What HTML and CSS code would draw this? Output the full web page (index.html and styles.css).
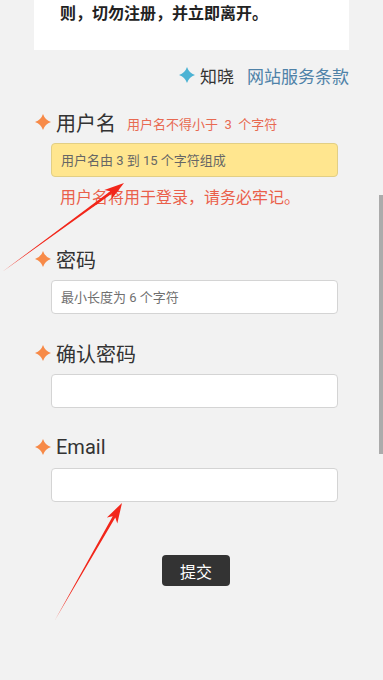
FILE: index.html
```html
<!DOCTYPE html>
<html lang="zh-CN">
<head>
    <meta charset="UTF-8">
    <meta name="viewport" content="width=device-width, initial-scale=1.0">
    <title>注册</title>
    <link rel="stylesheet" href="styles.css">
</head>
<body>
    <div class="wrap">
        <div class="notice">
            <p>则，切勿注册，并立即离开。</p>
        </div>

        <div class="terms">
            <svg class="star" viewBox="0 0 16 16"><path d="M8 0Q10 6 16 8Q10 10 8 16Q6 10 0 8Q6 6 8 0Z" fill="#4db3d4"/></svg>
            <span class="ok">知晓</span>
            <a href="#" class="terms-link">网站服务条款</a>
        </div>

        <form class="reg">
            <div class="field">
                <label class="label">
                    <svg class="star" viewBox="0 0 16 16"><path d="M8 0Q10 6 16 8Q10 10 8 16Q6 10 0 8Q6 6 8 0Z" fill="#f78a48"/></svg>
                    <span>用户名</span>
                    <em class="hint">用户名不得小于 &nbsp;3 &nbsp;个字符</em>
                </label>
                <input type="text" class="input warn" placeholder="用户名由 3 到 15 个字符组成">
                <p class="error">用户名将用于登录，请务必牢记。</p>
            </div>

            <div class="field">
                <label class="label">
                    <svg class="star" viewBox="0 0 16 16"><path d="M8 0Q10 6 16 8Q10 10 8 16Q6 10 0 8Q6 6 8 0Z" fill="#f78a48"/></svg>
                    <span>密码</span>
                </label>
                <input type="password" class="input" placeholder="最小长度为 6 个字符">
            </div>

            <div class="field">
                <label class="label">
                    <svg class="star" viewBox="0 0 16 16"><path d="M8 0Q10 6 16 8Q10 10 8 16Q6 10 0 8Q6 6 8 0Z" fill="#f78a48"/></svg>
                    <span>确认密码</span>
                </label>
                <input type="password" class="input">
            </div>

            <div class="field">
                <label class="label">
                    <svg class="star" viewBox="0 0 16 16"><path d="M8 0Q10 6 16 8Q10 10 8 16Q6 10 0 8Q6 6 8 0Z" fill="#f78a48"/></svg>
                    <span>Email</span>
                </label>
                <input type="text" class="input">
            </div>

            <div class="actions">
                <button type="button" class="submit">提交</button>
            </div>
        </form>
    </div>

    <!-- annotation arrows drawn over the screenshot -->
    <svg class="arrows" viewBox="0 0 383 680">
        <polygon points="124,183 111.3,199.6 112,193.6 2,272 110.2,191.2 104.3,190" fill="#f2261a"/>
        <polygon points="122,503 117.3,523.4 115.3,517.6 55,620 112.7,516.2 106.9,517.4" fill="#f2261a"/>
    </svg>

    <div class="scrollbar"></div>
</body>
</html>
```

FILE: styles.css
```css
body {
    margin: 0;
    background-color: #f2f2f2;
    font-family: "Roboto", "Noto Sans CJK SC", sans-serif;
    color: #333;
    height: 680px;
    overflow: hidden;
}

.wrap {
    margin: 0 34px;
}

.notice {
    background-color: #fff;
    padding: 2px 26px 24px;
}

.notice p {
    margin: 0;
    font-size: 16px;
    line-height: 24px;
    font-weight: bold;
    color: #222;
}

.terms {
    margin-top: 13px;
    display: flex;
    justify-content: flex-end;
    align-items: center;
    height: 24px;
    font-size: 17px;
}

.terms .star {
    width: 16px;
    height: 16px;
    margin-right: 5px;
}

.ok {
    color: #333;
}

.terms-link {
    margin-left: 13px;
    color: #4f82a8;
    text-decoration: none;
}

.reg {
    margin-top: 21px;
}

.field + .field {
    margin-top: 25px;
}

.label {
    display: flex;
    align-items: center;
    height: 28px;
    font-size: 20px;
    color: #333;
}

.label .star {
    width: 16px;
    height: 16px;
    margin: 0 5px 0 1px;
}

.hint {
    font-style: normal;
    font-size: 13px;
    color: #e86a52;
    margin-left: 11px;
    padding-top: 3px;
}

.input {
    display: block;
    box-sizing: border-box;
    width: 287px;
    height: 34px;
    margin: 7px 0 0 17px;
    padding: 0 9px;
    background-color: #fff;
    border: 1px solid #d4d4d4;
    border-radius: 4px;
    font-family: "Roboto", "Noto Sans CJK SC", sans-serif;
    font-size: 13px;
    color: #333;
}

.input::placeholder {
    color: #707070;
}

.input.warn {
    background-color: #ffe68f;
    border-color: #e2cf85;
}

.input.warn::placeholder {
    color: #666;
}

.error {
    margin: 10px 0 0 26px;
    padding-bottom: 11px;
    font-size: 16px;
    line-height: 22px;
    color: #ea604a;
}

.actions {
    margin-top: 53px;
    padding-left: 128px;
}

.submit {
    width: 68px;
    height: 31px;
    border: none;
    border-radius: 4px;
    background-color: #333;
    color: #fff;
    font-family: "Noto Sans CJK SC", sans-serif;
    font-size: 16px;
    cursor: pointer;
}

.arrows {
    position: absolute;
    left: 0;
    top: 0;
    width: 383px;
    height: 680px;
    pointer-events: none;
}

.scrollbar {
    position: absolute;
    left: 379px;
    top: 195px;
    width: 4px;
    height: 259px;
    background-color: #ababab;
}
```
